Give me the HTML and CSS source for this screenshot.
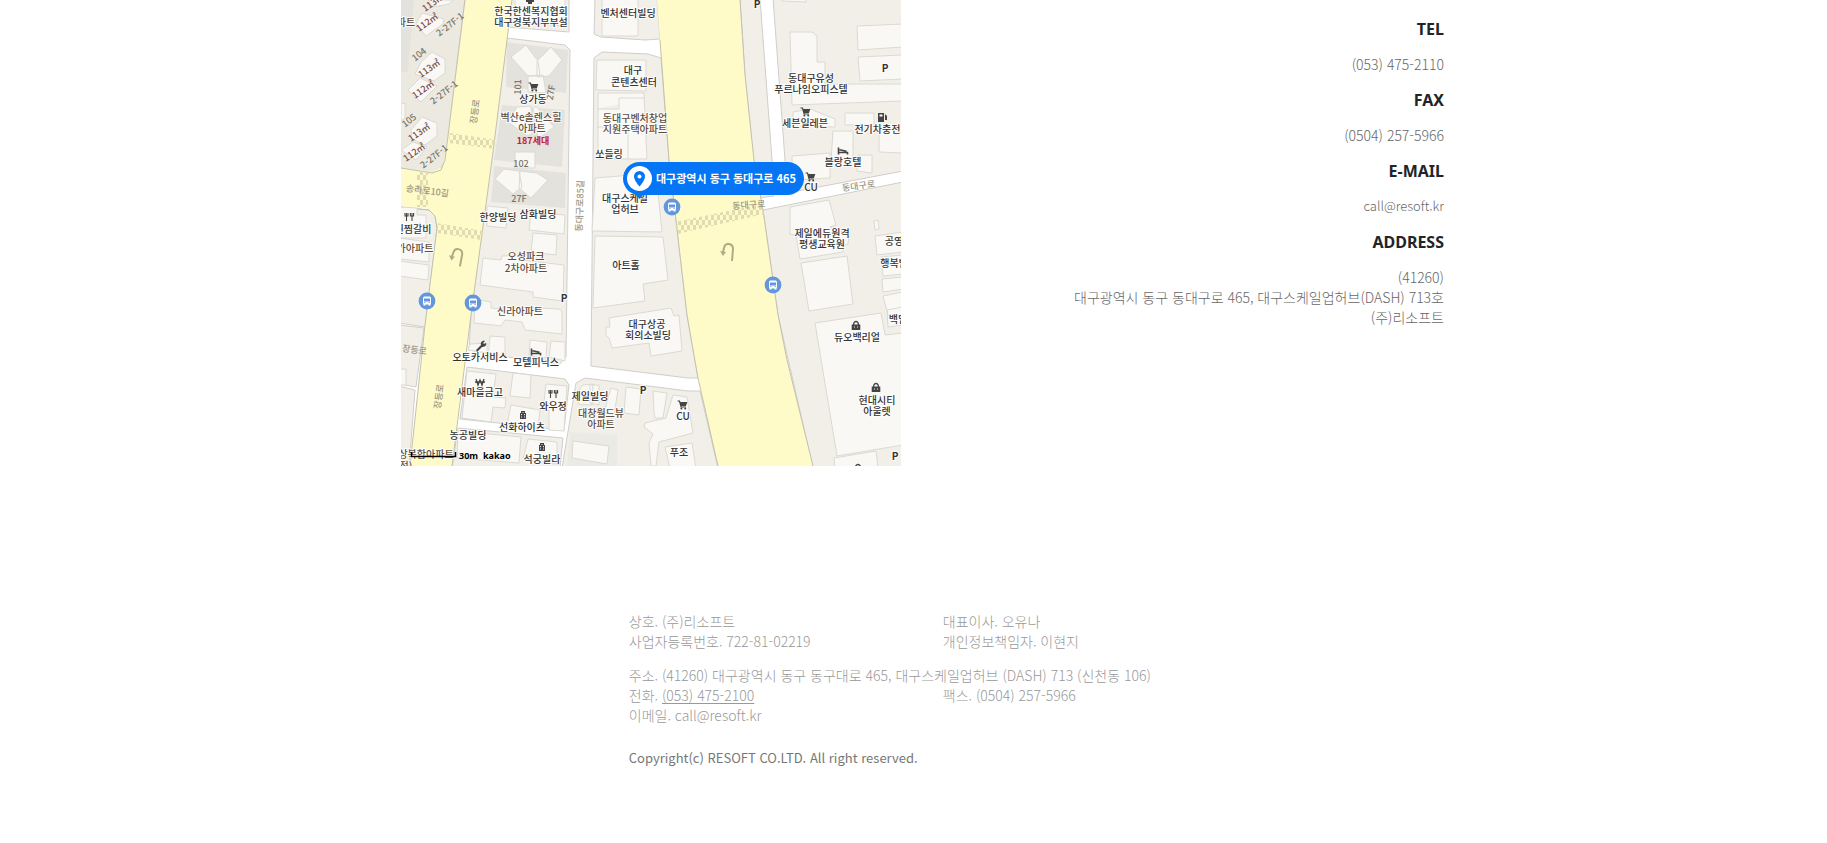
FILE: index.html
```html
<!DOCTYPE html>
<html lang="ko">
<head>
<meta charset="utf-8">
<title>리소프트</title>
<link rel="stylesheet" href="styles.css">
</head>
<body>
<main class="container contact">
<svg class="map" viewBox="401 0 500 466" role="img" aria-label="대구광역시 동구 동대구로 465">
<defs>
<g id="cart"><path d="M-4.500-4h2l1.600 6h4.800M-2-2.500h6.500l-1 3h-5" fill="none" stroke="#444" stroke-width="1.200"/><path d="M-2-2.500h6.500l-1 3h-5z" fill="#444"/><circle cx="-.6" cy="3.600" r="1"/><circle cx="3.200" cy="3.600" r="1"/></g>
<g id="bus"><circle r="8.400" fill="#6496dc"/><rect x="-4" y="-4.500" width="8" height="8" rx="1.500" fill="#fff"/><path d="M-3-2.500h6v3h-6z" fill="#6496dc"/><path d="M-3.500 3h2v1.600h-2zM1.500 3h2v1.600h-2z" fill="#fff"/><path d="M-2.700 1.600h1.200M1.500 1.600h1.200" stroke="#6496dc"/></g>
<g id="fork"><path d="M-4-4v3h3v-3M-2.500-4V4M3-4V4M1.400-4v3h3.200v-3" fill="none" stroke="#444" stroke-width="1.100"/></g>
<g id="house"><path d="M-3 4v-6h1v-2h4v2h1v6z"/><path d="M-1.500-1v1.200M1.500-1v1.200M-1.500 1.500v1M1.500 1.500v1M0-3v1" stroke="#eee"/></g>
<g id="bag"><path d="M-4.300-1.500h8.600V4h-8.600z"/><path d="M-2.300-1v-1.200a2.300 2.300 0 0 1 4.600 0V-1" fill="none" stroke="#444" stroke-width="1.300"/><path d="M-2 1h1M1 1h1" stroke="#eee"/></g>
<g id="bed"><path d="M-4.500-3.500v7M-4.500 1.500h9v2M-3.500-1.200l7 1.500" fill="none" stroke="#444" stroke-width="1.600"/></g>
<g id="turn" fill="none" stroke="#b0ab86" stroke-width="2"><path d="M4 10 5-2C5-8-3-9-4-3l-1 4"/><path d="M-8 0l3 5 3-4z" fill="#b0ab86" stroke="none"/></g>
<pattern id="cross" width="6" height="10" patternUnits="userSpaceOnUse"><path d="M0 0h3v5H0zM3 5h3v5H3z" fill="#e0dbb0"/></pattern>
</defs>
<path class="street" d="M401 0h500v466H401z"/>
<g class="block">
<path class="estate" d="M399-2h66l-20 162-5 10-8 3-33-5z"/>
<path d="M399 207l30 3 6 6 2 12-12 99-26-4zM399 325l25 3-8 59-17-3zM399 386l16 4-6 78h-10z"/>
<path d="M512-2l-5 29 62 5V-2z"/>
<path d="M507 38l58 7 5 5-4 307-7 8-22-3-68-12 2-35z"/>
<path d="M467 367l98 12 4 6-5 45-104-11zM458 428l105 10-3 30H452z"/>
<path d="M595-2l-1 36 7 3 44 3 15-1-3-41zM594 58l8-6 46 2 13 4 8 102 18 155 11 63h-10l-97-12z"/>
<path d="M576 383l9-5 103 13h12l18 77H562z"/>
<path d="M740-2h20l12 162 2 36-16 2-5-43-8-80zM773-2h130v173l-116 22-2-33z"/>
<path d="M763 210l140-28v286h-90l-35-153z"/>
</g>
<path class="shade" d="M401 0h13l-6 72h-7zM507 42l61 8-2 43-60-6zM502 105l63 5-3 57-68-7zM494 166l72 7-1 35-74-6z"/>
<path class="yard" d="M570 432l47 3v31h-50z"/>
<g class="avenue">
<path d="M465 0h47l-20 160-21 155-19 151h-42l15-141 12-97-1-10-7-9-28-3v-38l31 4 10-5 3-12z"/>
<path d="M657 0h83l2 40 3 35 9 85 9 50 15 105 9 45 26 106h-95l-20-88-11-63-18-155-9-120z"/>
</g>
<path class="kerb" d="M465 0l-20 160-4 10-9 3-31-5M401 207l28 3 6 6 2 12-12 97-15 141M512 0l-20 160-21 155-19 151M660 40l9 120 18 155 11 63 20 88M740 0l5 75 9 85 9 50 15 105 9 45 26 106"/>
<g fill="url(#cross)"><path d="M450 133l46 7-1 9-46-6zM417 171h11v36h-11zM437 223l46 8-1 9-45-7zM675 222l87-18 2 10-87 20z"/></g>
<g class="building">
<path d="M428 0l5 7 16-3 4-4zM416 24l6-11 22 6-1 5-17 12zM421 62l11-10 13 7v14l-11 8-19-7zM408 90l12-12 17 8-16 16zM411 130l11-13 15 6v13l-12 9-13-6zM401 150l12-8 14 5-11 13zM401 104l4-1v15l-4 3z"/>
<path d="M511 57l15-12 12 16 2 15h-12zM537 61l14-14 11 13-13 16-12 1zM528 76l15-1 3 18-18-1zM508 122l9-15 14-1 1 28-5 2zM536 106l18 21-16 12-5-30zM515 152h20v16h-20zM495 179l9-10 15 2 3 16-9 7zM520 171l17 2 11 7-17 18-12-10z"/>
<path d="M515-2h50v28l-50-4zM399 207l18 1v7h9v23h-27zM399 238l30 4v20l-30-3zM399 261l30 4-1 15-29-4zM487 206l21 2-2 20-19-2zM531 212l34 3-1 19-35-4zM533 233l24 2-1 20-25-3zM483 258l18 2 1-4 18-1 2 5 42 5-1 36-30-4v-5l-53-7zM475 299l16 3v6l26 3v-4l42 2 3 2v23l-37-4-3-8-17-2-4 6-27-3zM490 336l15 1v23l-17-2zM551 341l14 1v19l-16-4zM470 344l17-1v10l-19-3zM530 340l17 2-1 16-17-2z"/>
<path d="M467 371l29 3-3 23 13 1-1 10-12-1-2 15-29-4zM513 373l18 2-1 23-20-2zM546 384l21 2-3 45-15-1v-20h-6zM511 405l29 5-2 18-31-4zM458 431l63 6-2 26-62-5zM528 439l29 3v22l-34-5zM399 369h7v16h-7z"/>
<path d="M602-2h36v38h-36zM597 60h49v31l-50-1zM598 93h46l3 66h-49zM597 109h22v-11h26M597 127h31v32M595 178l61-5 6 59-70-1zM595 236l68 1 5 43-25 4 2 17-52 7zM609 318l62-10 3 8 5-1 3 36-31 5-2-13-37 5-3-10-3-3v-8h4zM626 387l15 2-2 26-15-2zM611 388l7 2-4 25-10-3zM590 385h9v20l-9-2zM573 441l36 5-2 18-35-6zM583 385l10-1-1 21-14-1 2-16zM653 391l14 2-4 25h-8l-1-5zM673 395l14 2 6 36-34 9-3 24h-5l-2-23 4-9-9-7 1-4 21-5zM665 447l27-4 4 25h-26z"/>
<path d="M782-2h24v4l-24-1zM790 32h22l5 4v26h8v22h78v17l-111 4zM857 26l46-2v23l-45 3zM858 57l45-2v24l-43 2zM793 112l17-3 25 10v8l-42-1zM845 113h29v12h-29zM833 131h20v27l-22 3zM879 130l24-1v24l-24-1zM792 156l38-3v25l-38 2zM858 155h14v18l-15-2zM790 207l39-7 7 25-6 2 19 7-1 10-5 1v7l-43 7-4-24-6-1zM801 263l46-7 6 48-44 7zM874 221l4-1 1 9-4 1zM875 236l28-4v20l-26 3zM881 257l22-2v19l-20 2zM882 279l21-2v12l-20 3zM883 296l20-4v23h-15zM815 323l66-10 4 22 18-2v112l-66 11zM887 310l16-3v18l-15 2zM834 458l42-7 2 17h-43z"/>
</g>
<g class="area vertical">
<text transform="translate(478 112) rotate(-82)">장등로</text><text transform="translate(442 397) rotate(-82)">장등로</text><text transform="translate(583 206) rotate(-88)">동대구로85길</text>
<text transform="translate(427 194) rotate(7)">송라로10길</text><text transform="translate(414 353) rotate(8)">장등로</text><text transform="translate(749 208) rotate(-4)">동대구로</text><text transform="translate(859 189) rotate(-8)">동대구로</text>
</g>
<g class="area">
<text transform="translate(421 57) rotate(-38)">104</text><text transform="translate(411 123) rotate(-38)">105</text>
<text transform="translate(452 27) rotate(-38)">2-27F-1</text><text transform="translate(446 95) rotate(-38)">2-27F-1</text><text transform="translate(436 159) rotate(-38)">2-27F-1</text>
<text transform="translate(521 87) rotate(-88)">101</text><text transform="translate(554 93) rotate(-80)">27F</text><text x="521" y="167">102</text><text x="519" y="202">27F</text>
<g class="unit"><text transform="translate(435 5) rotate(-35)">113㎡</text><text transform="translate(429 25) rotate(-35)">112㎡</text><text transform="translate(431 71) rotate(-35)">113㎡</text><text transform="translate(425 92) rotate(-35)">112㎡</text><text transform="translate(421 135) rotate(-35)">113㎡</text><text transform="translate(416 155) rotate(-35)">112㎡</text></g>
</g>
<g class="place">
<text x="531" y="15">한국한센복지협회</text><text x="531" y="26">대구경북지부부설</text><text x="628" y="17">벤처센터빌딩</text>
<text x="633" y="74">대구</text><text x="634" y="86">콘텐츠센터</text><text x="609" y="158">쏘들링</text><text x="533" y="103">상가동</text>
<text x="811" y="82">동대구유성</text><text x="811" y="93">푸르나임오피스텔</text><text x="805" y="127">세븐일레븐</text><text x="882" y="133">전기차충전소</text><text x="843" y="166">블랑호텔</text><text x="811" y="191">CU</text>
<text x="498" y="221">한양빌딩</text><text x="538" y="218">삼화빌딩</text><text x="413" y="233">찐찜갈비</text>
<text x="625" y="202">대구스케일</text><text x="625" y="213">업허브</text><text x="626" y="269">아트홀</text>
<text x="822" y="237">제일에듀원격</text><text x="822" y="248">평생교육원</text><text x="894" y="245">공영</text><text x="894" y="267">행복빌</text><text x="898" y="323">백밀</text>
<text x="480" y="361">오토카서비스</text><text x="536" y="366">모텔피닉스</text><text x="480" y="396">새마을금고</text><text x="553" y="410">와우정</text><text x="522" y="431">선화하이츠</text><text x="468" y="439">농공빌딩</text><text x="542" y="463">석궁빌라</text>
<text x="647" y="328">대구상공</text><text x="648" y="339">회의소빌딩</text><text x="590" y="400">제일빌딩</text><text x="683" y="420">CU</text><text x="679" y="456">푸조</text>
<text x="857" y="341">듀오백리얼</text><text x="877" y="404">현대시티</text><text x="877" y="415">아울렛</text>
<g class="parking"><text x="757" y="8">P</text><text x="885" y="72">P</text><text x="564" y="302">P</text><text x="643" y="394">P</text><text x="895" y="460">P</text></g>
</g>
<g class="place home">
<text x="531" y="121">벽산e솔렌스힐</text><text x="532" y="132">아파트</text><text x="635" y="122">동대구벤처창업</text><text x="635" y="133">지원주택아파트</text><text x="406" y="26">파트</text>
<text x="415" y="252">가아파트</text><text x="526" y="260">오성파크</text><text x="526" y="272">2차아파트</text><text x="520" y="315">신라아파트</text><text x="601" y="417">대창월드뷰</text><text x="601" y="428">아파트</text><text x="426" y="458">상복합아파트</text><text x="406" y="470">점)</text>
</g>
<text class="households" x="533" y="144">187세대</text>
<g fill="#444">
<use href="#cart" x="533" y="87"/><use href="#cart" x="805" y="112"/><use href="#cart" x="810" y="177"/><use href="#cart" x="682" y="405"/>
<use href="#fork" x="409" y="217"/><use href="#fork" x="553" y="394"/><use href="#house" x="523" y="415"/><use href="#house" x="542" y="447"/><use href="#bag" x="856" y="326"/><use href="#bag" x="876" y="388"/><use href="#bag" x="858" y="469"/>
<use href="#bed" x="843" y="151"/><use href="#bed" x="536" y="352"/>
<path d="M528 0h4v4h-4zM526 0h8v2h-8zM878 113h6v9h-6zM885 114l2 2v4h-2z"/><path d="M879.500 114.500h3v2h-3z" fill="#fff"/>
<path d="M476 350l5-5c-1-3 2-5 4-4l-2 2 1 1 2-1c1 3-2 4-4 4l-5 5z"/>
<path d="M476 379l2 6 2-5 2 5 2-6M475 382h10" fill="none" stroke="#444" stroke-width="1.300"/>
</g>
<use href="#turn" transform="translate(457 256) rotate(6)"/><use href="#turn" x="728" y="251"/>
<use href="#bus" x="427" y="301"/><use href="#bus" x="473" y="303"/><use href="#bus" x="672" y="207"/><use href="#bus" x="773" y="285"/>
<rect class="pin" x="623" y="162" width="181" height="33" rx="16.500"/><path class="pin" d="M634 193h11l-5.500 6z"/>
<circle cx="639.500" cy="178.500" r="12.500" fill="#fff"/>
<path class="pin" d="M639.500 171a5.500 5.500 0 0 0-5.500 5.500c0 4 5.500 10 5.500 10s5.500-6 5.500-10a5.500 5.500 0 0 0-5.500-5.500z"/><circle cx="639.500" cy="176.500" r="2" fill="#fff"/>
<text class="pin-label" x="726" y="183">대구광역시 동구 동대구로 465</text>
<path d="M411.500 452v4.500h44V452" fill="none" stroke="#000" stroke-width="1.500"/>
<text class="scale" x="459" y="459">30m</text><text class="brand" x="483" y="459">kakao</text>
</svg>
<dl class="details">
<dt>TEL</dt><dd>(053) 475-2110</dd>
<dt>FAX</dt><dd>(0504) 257-5966</dd>
<dt>E-MAIL</dt><dd class="email">call@resoft.kr</dd>
<dt>ADDRESS</dt><dd>(41260)<br>대구광역시 동구 동대구로 465, 대구스케일업허브(DASH) 713호<br>(주)리소프트</dd>
</dl>
</main>
<footer class="container">
<div class="company">
<div class="row"><span>상호. (주)리소프트</span><span>대표이사. 오유나</span><span>사업자등록번호. 722-81-02219</span><span>개인정보책임자. 이현지</span></div>
<div class="row"><span class="wide">주소. (41260) 대구광역시 동구 동구대로 465, 대구스케일업허브 (DASH) 713 (신천동 106)</span><span>전화. <a href="tel:0534752100">(053) 475-2100</a></span><span>팩스. (0504) 257-5966</span><span>이메일. call@resoft.kr</span></div>
<p class="copyright">Copyright(c) RESOFT CO.LTD. All right reserved.</p>
</div>
</footer>
</body>
</html>
```
FILE: styles.css
```css
* { box-sizing: border-box; }
body {
  margin: 0;
  background: #fff;
  font: 14px/20px "Noto Sans CJK KR", sans-serif;
}
.container { max-width: 1139px; margin: 0 auto; }
.contact {
  display: flex;
  justify-content: space-between;
  align-items: flex-start;
  padding: 0 39px 0 57px;
}
.map { flex: 0 0 500px; width: 500px; }
.details {
  margin: 0;
  padding-top: 17px;
  color: #666;
  font-weight: 300;
  text-align: right;
}
.details dt {
  margin-bottom: 13px;
  color: #212529;
  font: bold 16px/24px "Noto Sans", sans-serif;
}
.details dd { margin: 0 0 14px; }
.details .email { font-size: 13px; }

.company {
  margin-left: 25%;
  padding: 145px 0 60px;
  color: #999;
  font-weight: 300;
}
.row {
  display: grid;
  grid-template-columns: 314px 314px;
  margin-bottom: 14px;
}
.wide { grid-column: 1 / -1; }
.company a { color: inherit; text-underline-offset: 2px; }
.copyright { margin: 23px 0 0; color: #777; font-size: 13px; font-weight: 400; }

.map text {
  font-family: "Noto Sans CJK KR", sans-serif;
  text-anchor: middle;
}
.street { fill: #fff; }
.block path { fill: #f2efe9; stroke: #d0cecb; }
.block .estate { fill: #ece9e0; }
.shade { fill: #e4e2dc; }
.yard { fill: #ebebe6; }
.avenue { fill: #fefbc9; }
.kerb { fill: none; stroke: #c3c1ae; }
.building { fill: #f9f8f5; stroke: #dadad2; }
.area { fill: #77736a; font-size: 9px; font-weight: 500; }
.vertical { fill: #9a9784; }
.unit { fill: #7c4a46; }
.place {
  fill: #333;
  stroke: #fff;
  stroke-width: 2px;
  stroke-opacity: .8;
  paint-order: stroke;
  font-size: 10px;
  font-weight: 500;
}
.home { fill: #604e40; }
.parking { font-weight: 700; }
.households { fill: #c3202c; font-size: 9px; font-weight: 700; }
.pin { fill: #0475f4; }
.pin-label { fill: #fff; font-size: 11px; font-weight: 700; }
.map .scale, .map .brand { font: bold 9px "Noto Sans", sans-serif; text-anchor: start; }
```
